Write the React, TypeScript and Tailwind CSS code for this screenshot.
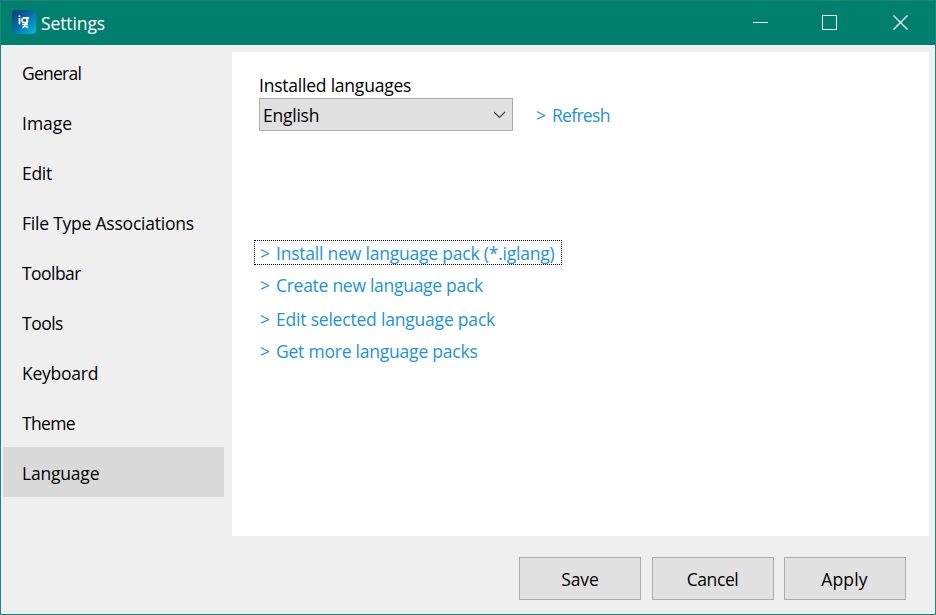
const navItems = [
  { label: "General", tracking: "tracking-[-0.75px]" },
  { label: "Image", tracking: "tracking-[0px]" },
  { label: "Edit", tracking: "tracking-[-0.3px]" },
  { label: "File Type Associations", tracking: "tracking-[-0.22px]" },
  { label: "Toolbar", tracking: "tracking-[-0.55px]" },
  { label: "Tools", tracking: "tracking-[-0.5px]" },
  { label: "Keyboard", tracking: "tracking-[-0.25px]" },
  { label: "Theme", tracking: "tracking-[-0.65px]" },
  { label: "Language", tracking: "tracking-[-0.2px]", active: true },
];

const buttons = [
  { label: "Save", className: "mr-[11px] tracking-[-0.1px]" },
  { label: "Cancel", className: "mr-[10px] pr-[1px] tracking-[-0.4px]" },
  { label: "Apply", className: "pr-[1px] tracking-[0.15px]" },
];

function ActionLink({ label, className }: { label: string; className: string }) {
  return (
    <a className="flex w-max whitespace-nowrap text-[#1b93dc]">
      <span className="w-[16px]">&gt;</span>
      <span className={className}>{label}</span>
    </a>
  );
}

function AppIcon() {
  return (
    <svg width="24" height="24" viewBox="0 0 24 24">
      <defs>
        <linearGradient id="app-bg" x1="0" y1="0.1" x2="0.9" y2="1">
          <stop offset="0" stopColor="#0b3f73" />
          <stop offset="0.5" stopColor="#0770ad" />
          <stop offset="1" stopColor="#00b8de" />
        </linearGradient>
      </defs>
      <rect width="24" height="24" rx="4" fill="url(#app-bg)" />
      <g fill="none" stroke="#fff">
        <path d="M7.500 8v6.300M7.500 5.400v1.500" strokeWidth="1.800" />
        <circle cx="12.600" cy="10.300" r="2.500" strokeWidth="1.600" />
        <path d="M12.600 7.800h4.600M15.500 8v3.300c0 1.500-1 2.500-2.800 2.900M10.300 14.500h5.800M13.100 14.300c-.200 1.700-1 2.700-2.600 3.400M13.100 14.600c.400 1.500 1.400 2.500 3 3.100" strokeWidth="1.500" />
      </g>
    </svg>
  );
}

export default function App() {
  return (
    <div className="flex h-[615px] w-[936px] flex-col border border-[#1b8877] bg-[#efefef] font-['Open_Sans',sans-serif] text-[17.5px] leading-[24px] text-black select-none">
      <header className="flex h-[44px] shrink-0 items-center bg-[#007f6e] pb-[2px] pl-[11px] text-white">
        <AppIcon />
        <h1 className="ml-[5px] pt-[2px] tracking-[-0.1px]">Settings</h1>
        <svg className="ml-auto" width="183" height="42" viewBox="0 0 183 42" fill="none" stroke="#fff" shapeRendering="crispEdges">
          <path d="M1 21.500h15" />
          <rect x="70.500" y="14.500" width="14" height="14" />
          <path d="M141.500 14.500l14 14M155.500 14.500l-14 14" shapeRendering="auto" strokeWidth="1.200" />
        </svg>
      </header>

      <div className="flex h-[491px] shrink-0">
        <nav className="ml-[2px] mt-[2px] w-[221px]">
          {navItems.map((item) => (
            <div
              key={item.label}
              className={`flex h-[50px] items-center whitespace-nowrap pl-[19px] pt-[1px] ${item.tracking} ${item.active ? "bg-[#dadada]" : ""}`}
            >
              {item.label}
            </div>
          ))}
        </nav>

        <main className="ml-[8px] mt-[7px] w-[697px] bg-white">
          <div className="ml-[27px] mt-[21px] mb-[1px] tracking-[-0.22px]">Installed languages</div>
          <div className="ml-[27px] flex h-[33px] items-center">
            <div className="flex h-[33px] w-[254px] items-center border border-[#adadad] bg-[#e1e1e1] pl-[3px] pr-[6px]">
              <span className="tracking-[-0.25px]">English</span>
              <svg className="ml-auto" width="13" height="8" viewBox="0 0 13 8" fill="none" stroke="#444" strokeWidth="1.200">
                <path d="M1 1l5.500 5.500L12 1" />
              </svg>
            </div>
            <div className="ml-[23px]">
              <ActionLink label="Refresh" className="tracking-[-0.7px]" />
            </div>
          </div>

          <div className="ml-[22px] mt-[109px]">
            <div className="flex h-[25px] w-[308px] items-center border border-dotted border-black pl-[5px] pt-[1px]">
              <ActionLink label="Install new language pack (*.iglang)" className="tracking-[-0.21px]" />
            </div>
            <div className="pl-[6px] pt-[8px]">
              <ActionLink label="Create new language pack" className="tracking-[-0.28px]" />
            </div>
            <div className="pl-[6px] pt-[10px]">
              <ActionLink label="Edit selected language pack" className="tracking-[-0.2px]" />
            </div>
            <div className="pl-[6px] pt-[8px]">
              <ActionLink label="Get more language packs" className="tracking-[-0.22px]" />
            </div>
          </div>
        </main>
      </div>

      <footer className="flex justify-end pr-[29px] pt-[21px]">
        {buttons.map((button) => (
          <button
            key={button.label}
            className={`h-[43px] w-[122px] border border-[#adadad] bg-[#e1e1e1] pt-[1px] ${button.className}`}
          >
            {button.label}
          </button>
        ))}
      </footer>
    </div>
  );
}
